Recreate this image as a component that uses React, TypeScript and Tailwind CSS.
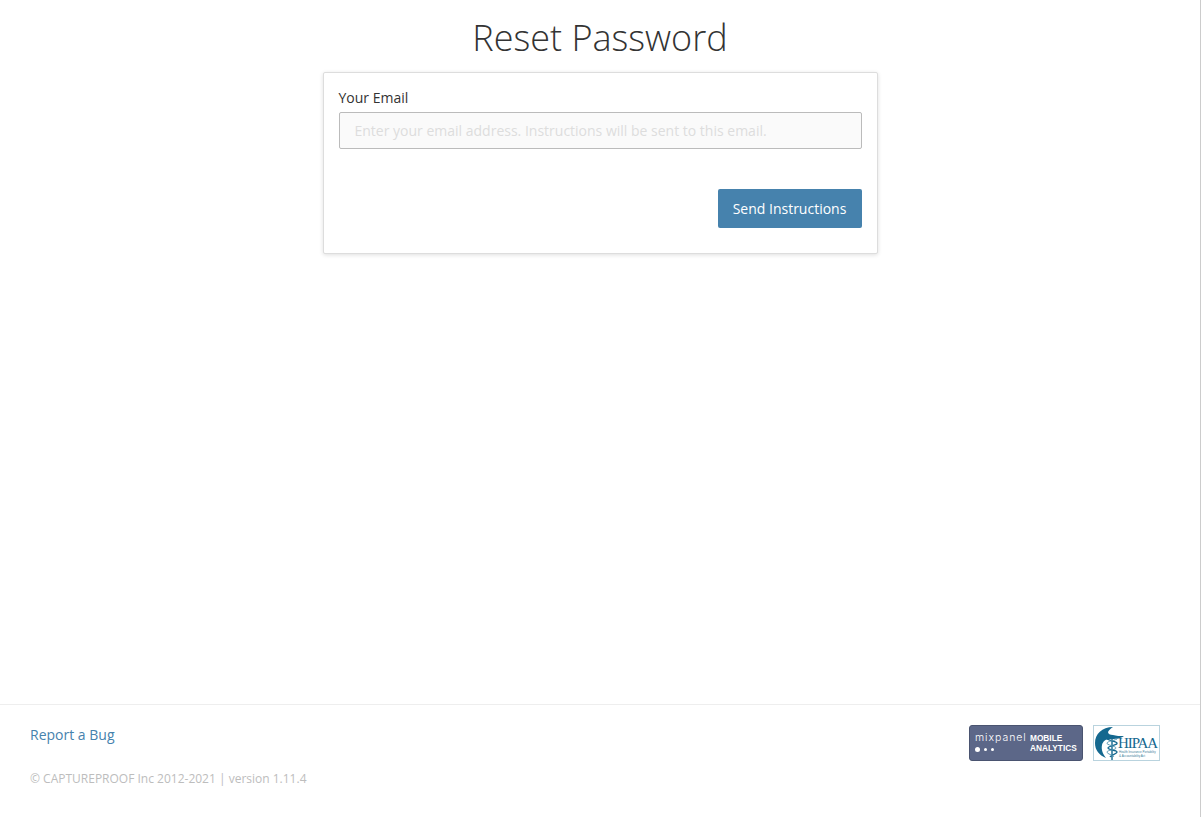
function MixpanelBadge() {
  return (
    <div className="flex h-[36px] w-[114px] items-start rounded-[3px] border border-[#4a5470] bg-[#5c6788] pt-[6px] pl-[5px]">
      <div className="flex w-[55px] flex-col gap-[4px]">
        <span className="font-['Inter',sans-serif] text-[10.5px] leading-[11px] font-light tracking-[0.95px] text-white">
          mixpanel
        </span>
        <div className="flex items-center gap-[4px]">
          <span className="h-[5px] w-[5px] rounded-full bg-white" />
          <span className="h-[3px] w-[3px] rounded-full bg-white" />
          <span className="h-[3px] w-[3px] rounded-full bg-white" />
        </div>
      </div>
      <div className="mt-[1px] font-['Liberation_Sans',sans-serif] text-[8.3px] leading-[10px] font-bold text-white">
        <div>MOBILE</div>
        <div>ANALYTICS</div>
      </div>
    </div>
  );
}

function HipaaBadge() {
  return (
    <div className="relative h-[36px] w-[67px] overflow-hidden border border-[#b9d3de] bg-white">
      <svg viewBox="0 0 65 34" className="absolute inset-0 h-full w-full">
        {/* crescent and wings */}
        <path
          d="M19 1C8 1 1 8 1 17c0 7 4 12 11 15-3-4-5-8-4-13 1-4 4-6 8-6 5 0 10 0 14-3-4 0-8 0-11-1-3 0-5-1-5-3 1-2 3-4 5-5z"
          fill="#14688f"
        />
        {/* caduceus */}
        <path d="M18 9v25" stroke="#14688f" strokeWidth="1.4" />
        <path
          d="M13 13c4 2 9 2 10 4s-9 3-9 5 9 2 9 4-6 3-7 5"
          fill="none"
          stroke="#14688f"
          strokeWidth="1.3"
        />
        <path
          d="M23 13c-4 2-9 2-10 4s9 3 9 5-9 2-9 4 6 3 7 5"
          fill="none"
          stroke="#5c9ab5"
          strokeWidth="1"
        />
      </svg>
      <div className="absolute top-[10px] left-[24px] font-['Liberation_Serif',serif] text-[15px] leading-[15px] tracking-[-1.1px] text-[#14688f]">
        HIPAA
      </div>
      <div className="absolute top-[24px] left-[25px] font-['Liberation_Sans',sans-serif] text-[3px] leading-[4px] whitespace-nowrap text-[#3f7f9c]">
        <div>Health Insurance Portability</div>
        <div>&amp; Accountability Act</div>
      </div>
    </div>
  );
}

export default function App() {
  return (
    <div className="flex h-[817px] flex-col border-r border-[#cccccc] bg-white font-['Open_Sans',sans-serif] text-[14px] text-[#333333]">
      <main className="flex flex-1 flex-col items-center">
        <h1 className="mt-[15px] text-[36px] leading-[46px] font-light text-[#333333]">
          Reset Password
        </h1>

        {/* Card */}
        <div className="mt-[11px] h-[182px] w-[555px] rounded-[2px] border border-[#dddddd] bg-white px-[15px] pt-[15px] shadow-[0_1px_4px_rgba(0,0,0,0.13)]">
          <label className="block text-[14px] leading-[20px] text-[#333333]">Your Email</label>
          <input
            type="email"
            placeholder="Enter your email address. Instructions will be sent to this email."
            className="mt-[4px] block h-[37px] w-full rounded-[2px] border border-[#bbbbbb] bg-[#fafafa] px-[15px] text-[14px] outline-none placeholder:text-[#dddddd]"
          />
          <div className="mt-[40px] flex justify-end">
            <button className="h-[39px] w-[144px] rounded-[2px] bg-[#4682ad] text-[14px] text-white">
              Send Instructions
            </button>
          </div>
        </div>
      </main>

      {/* Footer */}
      <footer className="flex h-[113px] items-start justify-between border-t border-[#eeeeee] pr-[40px] pl-[30px]">
        <div>
          <a className="mt-[20px] block text-[14px] leading-[20px] text-[#4682ad]">Report a Bug</a>
          <p className="mt-[25px] text-[12px] leading-[17px] text-[#bdbdbd]">
            © CAPTUREPROOF Inc 2012-2021 | version 1.11.4
          </p>
        </div>
        <div className="mt-[20px] flex gap-[10px]">
          <MixpanelBadge />
          <HipaaBadge />
        </div>
      </footer>
    </div>
  );
}
